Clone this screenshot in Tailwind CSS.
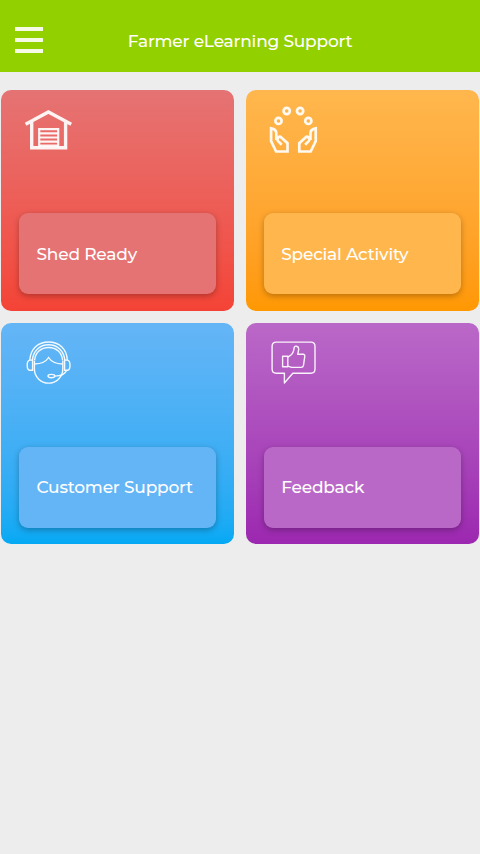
<!DOCTYPE html>
<html lang="en">
<head>
    <meta charset="UTF-8">
    <meta name="viewport" content="width=device-width, initial-scale=1.0">
    <title>Farmer eLearning Support</title>
    <script src="https://cdn.jsdelivr.net/npm/@tailwindcss/browser@4"></script>
</head>
<body class="bg-[#ededed] min-h-screen font-[Montserrat,Inter,sans-serif] text-white">
    <header class="h-[72px] bg-[#93d000] flex items-center pt-[8px] pl-[14.5px]">
        <button class="w-[28.5px] flex flex-col gap-[7px]" aria-label="Menu">
            <span class="h-[4px] w-full bg-white/90"></span>
            <span class="h-[4px] w-full bg-white/90"></span>
            <span class="h-[4px] w-full bg-white/90"></span>
        </button>
        <h1 class="flex-1 text-center pt-[1px] pr-[43px] text-[17px] font-medium tracking-[-0.2px] leading-6 whitespace-nowrap">Farmer eLearning Support</h1>
    </header>

    <main class="grid grid-cols-2 gap-x-3 gap-y-[11.7px] px-[1.3px] pt-[17.7px]">
        <div class="h-[221.5px] rounded-[10px] bg-linear-to-b from-[#e57373] to-[#f44336] px-[17.7px] pt-[13.3px] pb-[17px] flex flex-col justify-between">
            <svg class="w-[60px] h-[56px]" viewBox="19 103 60 56" fill="none" stroke="#fff" stroke-opacity=".92" stroke-width="3.4">
                <path d="M25.6 124.3 48.4 112l22.8 12.3M31.7 121v26.7h33.9V121"/>
                <path d="M39.2 147.5v-18.3h19v18.3M40 133.4h17.5M40 137.5h17.5M40 141.6h17.5M40 145.5h17.5" stroke-width="2.2"/>
            </svg>
            <div class="h-[81px] rounded-[9px] bg-[#e57373] shadow-[0_2px_6px_rgba(0,0,0,0.28)] flex items-center pt-[2px] pl-[17.5px] text-[17px] font-medium tracking-[-0.2px]">
                <span>Shed Ready</span>
            </div>
        </div>

        <div class="h-[221.5px] rounded-[10px] bg-linear-to-b from-[#ffb74d] to-[#ff9800] px-[17.7px] pt-[13.3px] pb-[17px] flex flex-col justify-between">
            <svg class="w-[60px] h-[56px]" viewBox="263.7 103 60 56" fill="none" stroke="#fff" stroke-opacity=".92" stroke-width="2.7">
                <circle cx="286.4" cy="111" r="3.1"/>
                <circle cx="299.8" cy="111" r="3.1"/>
                <circle cx="278.2" cy="120.9" r="3.1"/>
                <circle cx="308" cy="120.9" r="3.1"/>
                <path d="M276 140v-6.8q0-4-5.2-4.8v12.8l5 10.3h11.4v-8.3l-6.2-5.8q-1.6-1.3-3.1.1-1.7 1.8-.1 3.6l3.6 3.6"/>
                <path d="M310.2 140v-6.8q0-4 5.2-4.8v12.8l-5 10.3H299v-8.3l6.2-5.8q1.6-1.3 3.1.1 1.7 1.800.1 3.600l-3.600 3.600"/>
            </svg>
            <div class="h-[81px] rounded-[9px] bg-[#ffb74d] shadow-[0_2px_6px_rgba(0,0,0,0.28)] flex items-center pt-[2px] pl-[17.5px] text-[17px] font-medium tracking-[-0.2px]">
                <span>Special Activity</span>
            </div>
        </div>

        <div class="h-[221.5px] rounded-[10px] bg-linear-to-b from-[#64b5f6] to-[#03a9f4] px-[17.7px] pt-[13.3px] pb-[16.5px] flex flex-col justify-between">
            <svg class="w-[60px] h-[56px]" viewBox="19 336.3 60 56" fill="none" stroke="#fff" stroke-opacity=".92" stroke-width="1.4">
                <path d="M29.8 360.5C30.5 349 38.2 342.3 48.6 342.3S66.7 349 67.4 360.5"/>
                <path d="M32.4 360.5c.8-9.4 7.5-15.5 16.2-15.5s15.4 6.1 16.2 15.5"/>
                <path d="M34.6 360.7c.6-7.8 6.2-12.9 14-12.9s13.4 5.1 14 12.9"/>
                <path d="M32.6 360.4h-3q-2.4.6-2.4 5.1t2.4 5.1h3zM64.6 360.4h3q2.4.6 2.4 5.1t-2.4 5.1h-3z"/>
                <path d="M34.4 361v8c0 8 6.2 14.4 14.2 14.4S62.800 377 62.800 369v-8"/>
                <path d="M34.6 364.3c6-.2 11.600-2.600 14-6.500 2.400 3.900 8 6.300 14 6.500"/>
                <ellipse cx="51.4" cy="376.4" rx="3.4" ry="1.700"/>
                <path d="M54.8 376.4c5.200 0 10.200-1.400 11.800-5.800"/>
            </svg>
            <div class="h-[81px] rounded-[9px] bg-[#64b5f6] shadow-[0_2px_6px_rgba(0,0,0,0.28)] flex items-center pt-[1px] pl-[17.5px] text-[17px] font-medium tracking-[-0.2px]">
                <span>Customer Support</span>
            </div>
        </div>

        <div class="h-[221.5px] rounded-[10px] bg-linear-to-b from-[#ba68c8] to-[#9c27b0] px-[17.7px] pt-[13.3px] pb-[16.5px] flex flex-col justify-between">
            <svg class="w-[60px] h-[56px]" viewBox="263.7 336.3 60 56" fill="none" stroke="#fff" stroke-opacity=".92" stroke-width="1.4" stroke-linejoin="round">
                <path d="M276 342.4h34.5q4.2 0 4.2 4.2v22.8q0 4.2-4.2 4.2h-18l-8.4 9.7v-9.7H276q-4.2 0-4.2-4.2v-22.8q0-4.2 4.2-4.2z"/>
                <path d="M282.3 356.5h5.2v10.6h-5.2z"/>
                <path d="M287.5 357.3c3-1.3 5.2-3.7 5.8-6.3l.6-3.2c.5-2.2 4.500-1.600 4.500 1.300 0 2-.6 3.500-1 5.400h5.800q1.600.3 1.300 2l-1.300 9.200q-.4 2-2.300 2h-9.600l-3.800-1.300"/>
            </svg>
            <div class="h-[81px] rounded-[9px] bg-[#ba68c8] shadow-[0_2px_6px_rgba(0,0,0,0.28)] flex items-center pt-[1px] pl-[17.5px] text-[17px] font-medium tracking-[-0.2px]">
                <span>Feedback</span>
            </div>
        </div>
    </main>
</body>
</html>
